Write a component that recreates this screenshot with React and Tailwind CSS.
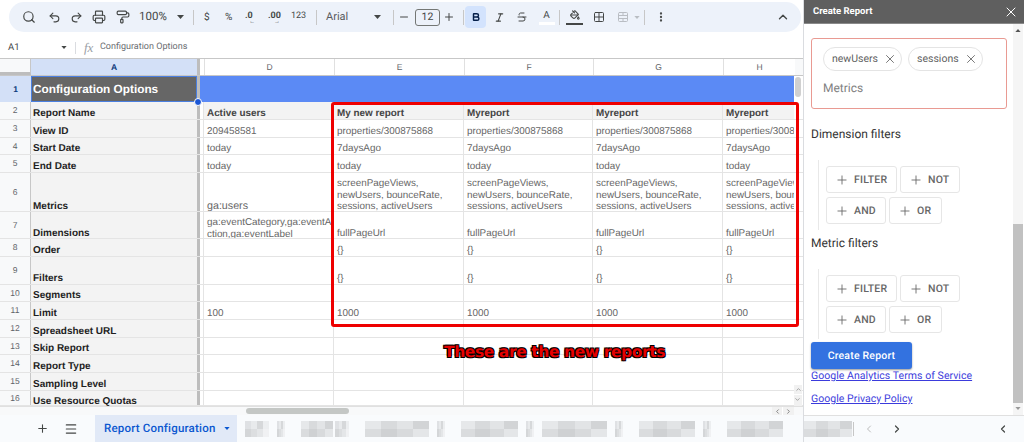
import React from "react";
import { Search, Undo2, Redo2, Printer, PaintRoller, ChevronUp, Minus, Plus, Bold, Italic, Strikethrough, PaintBucket, Grid2x2, TableCellsMerge, MoreVertical, X, Menu, ChevronLeft, ChevronRight } from "lucide-react";

const sans = "font-['Liberation_Sans',Arial,sans-serif]";
const roboto = "font-['Roboto','Liberation_Sans',sans-serif]";

const metrics = "screenPageViews, newUsers, bounceRate, sessions, activeUsers";
const rows = [
  { n: 2, h: "h-[18px]", label: "Report Name", head: true, d: "Active users", e: "My new report", o: "Myreport" },
  { n: 3, h: "h-[18px]", label: "View ID", d: "209458581", e: "properties/300875868", o: "properties/300875868", hv: "properties/3008" },
  { n: 4, h: "h-[17px]", label: "Start Date", d: "today", e: "7daysAgo", o: "7daysAgo" },
  { n: 5, h: "h-[18px]", label: "End Date", d: "today", e: "today", o: "today" },
  { n: 6, h: "h-[39px]", label: "Metrics", nudge: "translate-y-[2px]", cn: "translate-y-[3px]", d: <span className="text-[10.7px] relative -top-[1px]">ga:users</span>, e: metrics, o: metrics, wrap: true },
  { n: 7, h: "h-[27px]", label: "Dimensions", nudge: "translate-y-[2px]", cn: "translate-y-[2px]", d: <span className="relative top-[1px]">ga:eventCategory,ga:eventA<br />ction,ga:eventLabel</span>, e: "fullPageUrl", o: "fullPageUrl" },
  { n: 8, h: "h-[18px]", label: "Order", d: "", e: "{}", o: "{}" },
  { n: 9, h: "h-[28px]", label: "Filters", d: "", e: "{}", o: "{}" },
  { n: 10, h: "h-[17px]", label: "Segments", d: "", e: "", o: "" },
  { n: 11, h: "h-[18px]", label: "Limit", d: "100", e: "1000", o: "1000" },
  { n: 12, h: "h-[18px]", label: "Spreadsheet URL", d: "", e: "", o: "" },
  { n: 13, h: "h-[17px]", label: "Skip Report", d: "", e: "", o: "" },
  { n: 14, h: "h-[18px]", label: "Report Type", d: "", e: "", o: "" },
  { n: 15, h: "h-[18px]", label: "Sampling Level", d: "", e: "", o: "" },
  { n: 16, h: "h-[15px]", label: "Use Resource Quotas", nudge: "translate-y-[3px]", d: "", e: "", o: "" },
];

function Tool({ children, className = "" }) {
  return <div className={`flex items-center justify-center shrink-0 text-[#444746] ${className}`}>{children}</div>;
}

function Sep() {
  return <div className="w-px h-[15px] bg-[#c7c7c7] shrink-0" />;
}

function Caret({ className = "", fill = "#444746", w = 7, h = 4 }) {
  return <svg width={w} height={h} viewBox="0 0 7 4" className={`shrink-0 ${className}`}><path d="M0 0h7L3.5 4z" fill={fill} /></svg>;
}

function Toolbar() {
  return (
    <div className="h-[37px] pt-[2px] pl-[9px] pb-[5px] bg-white shrink-0">
      <div className={`h-[30px] w-[792px] rounded-full bg-[#edf2fa] flex items-center text-[#444746] ${roboto}`}>
        <Tool className="ml-[12px] w-[16px]"><Search size={14} /></Tool>
        <Tool className="ml-[9px] w-[16px]"><Undo2 size={13} /></Tool>
        <Tool className="ml-[6px] w-[16px]"><Redo2 size={13} /></Tool>
        <Tool className="ml-[7px] w-[16px]"><Printer size={14} /></Tool>
        <Tool className="ml-[8px] w-[16px]"><PaintRoller size={14} /></Tool>
        <span className="ml-[8px] text-[11.5px] w-[31px]">100%</span>
        <Caret className="ml-[7px]" />
        <div className="ml-[9px]"><Sep /></div>
        <span className="ml-[10px] text-[10px] w-[8px]">$</span>
        <span className="ml-[13px] text-[10px] w-[10px]">%</span>
        <span className="ml-[10px] text-[9px] font-bold w-[12px] relative -top-[1px] leading-none">.0<span className="absolute left-[4px] top-[7px] text-[6px]">←</span></span>
        <span className="ml-[11px] text-[9px] font-bold w-[15px] relative -top-[1px] leading-none">.00<span className="absolute left-[6px] top-[7px] text-[6px]">→</span></span>
        <span className="ml-[8px] text-[9px] w-[15px]">123</span>
        <div className="ml-[10px]"><Sep /></div>
        <span className={`ml-[9px] text-[11px] w-[32px] text-[#5a5c5f] ${roboto}`}>Arial</span>
        <Caret className="ml-[16px]" />
        <div className="ml-[12px]"><Sep /></div>
        <Tool className="ml-[2px] w-[16px]"><Minus size={12} /></Tool>
        <div className="ml-[3px] w-[25px] h-[17px] rounded-[3px] border border-[#747775] flex items-center justify-center text-[10.5px]">12</div>
        <Tool className="ml-[1px] w-[16px]"><Plus size={12} /></Tool>
        <div className="ml-[6px]"><Sep /></div>
        <div className="ml-[1px] w-[21px] h-[22px] rounded-[4px] bg-[#d3e3fd] flex items-center justify-center text-[#041e49]"><Bold size={10} strokeWidth={3.5} /></div>
        <Tool className="ml-[5px] w-[16px]"><Italic size={11} strokeWidth={2.4} /></Tool>
        <Tool className="ml-[7px] w-[16px]"><Strikethrough size={12} /></Tool>
        <div className="ml-[8px] w-[17px] flex flex-col items-center text-[10px] leading-[11px]">A<div className="w-[16px] h-[3px] bg-white mt-[1px]" /></div>
        <div className="ml-[4px]"><Sep /></div>
        <div className="ml-[6px] w-[17px] flex flex-col items-center text-[#444746]"><PaintBucket size={10} strokeWidth={2.6} /><div className="w-[17px] h-[2px] bg-[#444746] mt-[3px]" /></div>
        <Tool className="ml-[9px] w-[14px]"><Grid2x2 size={12} /></Tool>
        <Tool className="ml-[10px] w-[14px] opacity-30"><TableCellsMerge size={12} /></Tool>
        <Caret className="ml-[4px] opacity-30" w={6} h={3} />
        <div className="ml-[4px]"><Sep /></div>
        <Tool className="ml-[9px] w-[14px]"><MoreVertical size={12} strokeWidth={2.6} /></Tool>
        <Tool className="ml-[108px] w-[14px]"><ChevronUp size={14} strokeWidth={2.4} /></Tool>
      </div>
    </div>
  );
}

function FormulaBar() {
  return (
    <div className={`h-[22px] shrink-0 bg-white border-b border-[#c7c7c7] flex items-center text-[#5f6368] ${roboto}`}>
      <span className="ml-[8px] w-[48px] text-[9.5px] text-[#444746] pt-[1px]">A1</span>
      <Caret className="ml-[5px]" w={6} h={3} />
      <div className="ml-[8px] w-px h-[12px] bg-[#dadce0]" />
      <span className="ml-[8px] text-[13px] italic text-[#9aa0a6] font-['Liberation_Serif',serif] w-[17px]">fx</span>
      <span className="-ml-[1px] text-[9px] text-[#6b6e72] pt-[1px]">Configuration Options</span>
    </div>
  );
}

function Cell({ w, children, head, border = true, wrap, nudge = "translate-y-[1px]" }) {
  return (
    <div className={`${w} h-full shrink-0 px-[3px] flex items-end ${wrap ? "pb-[1px]" : "pb-0"} ${border ? "border-r border-[#e4e4e4]" : ""} ${head ? "bg-[#f3f3f3] font-bold text-[#444]" : "text-[#666]"} overflow-hidden`}>
      <div className={`w-full ${nudge} ${wrap ? "leading-[11.7px]" : "leading-[12px] whitespace-nowrap"} text-[9.9px]`}>{children}</div>
    </div>
  );
}

function ColHeader() {
  const cols = [["w-[130px]", "D"], ["w-[130px]", "E"], ["w-[129px]", "F"], ["w-[130px]", "G"], ["w-[72px]", "H"]];
  return (
    <div className={`h-[17px] shrink-0 flex text-[8.5px] text-[#5f6368] border-b border-[#c7c7c7] ${sans}`}>
      <div className="w-[31px] bg-[#f8f9fa] border-r border-[#c7c7c7] border-b-[3px] border-b-[#bdbdbd]" />
      <div className="w-[166px] bg-[#d3e0f7] flex items-center justify-center font-bold text-[#0b3a7a] pt-[1px]">A</div>
      <div className="w-[3px] bg-[#bdbdbd]" />
      <div className="w-[4px] bg-white" />
      {cols.map(([w, c]) => (
        <div key={c} className={`${w} flex items-center justify-center border-l border-[#e0e0e0] bg-white pt-[1px]`}>{c}</div>
      ))}
      <div className="flex-1 bg-[#f8f9fa]" />
    </div>
  );
}

function Sheet() {
  return (
    <div className={`flex-1 min-h-0 flex flex-col relative ${sans}`}>
      <ColHeader />
      <div className="h-[26px] shrink-0 flex relative">
        <div className="w-[31px] bg-[#d3e0f7] flex items-center justify-center text-[8.5px] font-bold text-[#0b3a7a]">1</div>
        <div className="w-[166px] bg-[#666666] border border-[#4a7fe0] flex items-center pl-[1px] pt-[1px] text-white font-bold text-[11.8px]">Configuration Options</div>
        <div className="w-[3px] bg-[#bdbdbd]" />
        <div className="w-[594px] bg-[#5b8af5]" />
        <div className="flex-1 bg-white pl-[1px] pr-[2px]"><div className="h-[20px] mt-[1px] rounded-full bg-[#d0d0d0]" /></div>
        <div className="absolute left-[194px] bottom-[-4px] w-[6px] h-[6px] rounded-full bg-[#1a56d6] border border-white box-content z-10" />
      </div>
      {rows.map((r) => (
        <div key={r.n} className={`${r.h} shrink-0 flex border-b border-[#e4e4e4]`}>
          <div className="w-[31px] h-full bg-[#f8f9fa] border-r border-[#c7c7c7] flex items-center justify-center text-[8.5px] text-[#5f6368]">{r.n}</div>
          <div className="w-[166px] h-full bg-[#f3f3f3] flex items-end pl-[2px] text-[10px] leading-[13px] font-bold text-[#1f1f1f]">
            <span className={`whitespace-nowrap ${r.nudge || "translate-y-[1px]"}`}>{r.label}</span>
          </div>
          <div className="w-[3px] h-full bg-[#bdbdbd]" />
          <div className="w-[4px] h-full bg-white border-r border-[#e4e4e4]" />
          <Cell w="w-[130px]" head={r.head} nudge={r.cn}>{r.d}</Cell>
          <Cell w="w-[130px]" head={r.head} wrap={r.wrap} nudge={r.cn}>{r.e}</Cell>
          <Cell w="w-[129px]" head={r.head} wrap={r.wrap} nudge={r.cn}>{r.o}</Cell>
          <Cell w="w-[130px]" head={r.head} wrap={r.wrap} nudge={r.cn}>{r.o}</Cell>
          <div className="w-[71px] h-full overflow-hidden">
            <Cell w="w-[130px]" head={r.head} border={false} wrap={r.wrap} nudge={r.cn}>{r.hv || r.o}</Cell>
          </div>
          <div className="w-[9px] h-full bg-white shrink-0" />
        </div>
      ))}
      <div className="flex-1 min-h-0 flex relative items-center bg-[#f8f9fa] border-t border-[#e0e0e0]">
        <div className="ml-[246px] w-[103px] h-[6px] rounded-full bg-[#c4c7c5]" />
        <div className="absolute left-[772px] top-0 w-[22px] h-full flex text-[#777] bg-[#f1f1f1]">
          <div className="w-[11px] flex items-center justify-center border-r border-white"><ChevronLeft size={7} strokeWidth={3} /></div>
          <div className="w-[11px] flex items-center justify-center"><ChevronRight size={7} strokeWidth={3} /></div>
        </div>
      </div>
      <div className="absolute left-[794px] top-[326px] w-[8px] h-[21px] flex flex-col bg-[#f1f1f1] text-[#999]">
        <div className="h-[10px] flex items-center justify-center border-b border-white"><ChevronUp size={7} strokeWidth={3} /></div>
        <div className="h-[10px] flex items-center justify-center rotate-180"><ChevronUp size={7} strokeWidth={3} /></div>
      </div>
    </div>
  );
}

function Block({ w, ml, tones }) {
  return (
    <div className={`${w} ${ml} h-[16px] shrink-0 grid grid-cols-4 grid-rows-2`}>
      {tones.map((t, i) => <div key={i} className={t} />)}
    </div>
  );
}

const toneA = ["bg-[#dfe1e4]", "bg-[#e8eaec]", "bg-[#d6d8da]", "bg-[#eceef0]", "bg-[#d4d6d8]", "bg-[#dcdee0]", "bg-[#e4e6e8]", "bg-[#f0f1f3]"];
const toneB = ["bg-[#e6e8ea]", "bg-[#d8dadc]", "bg-[#e2e4e6]", "bg-[#d2d4d6]", "bg-[#dadcde]", "bg-[#cfd1d3]", "bg-[#d8dadc]", "bg-[#e4e6e8]"];

function Tabs() {
  return (
    <div className={`h-[27px] shrink-0 bg-[#f9fbfd] flex items-center relative ${roboto}`}>
      <Plus size={13} strokeWidth={2} className="ml-[36px] text-[#444746]" />
      <Menu size={14} strokeWidth={2} className="ml-[15px] text-[#444746]" />
      <div className="ml-[17px] w-[142px] h-full bg-[#e1e9f7] flex items-center text-[#0b57d0] pl-[9px] text-[11.5px] font-medium tracking-[0.2px] shrink-0">
        Report Configuration
        <Caret className="ml-[8px]" fill="#0b57d0" w={6} h={3} />
      </div>
      <div className="flex items-center">
        <Block w="w-[24px]" ml="ml-[8px]" tones={toneA} />
        <Block w="w-[8px]" ml="ml-[8px]" tones={toneA} />
        <Block w="w-[32px]" ml="ml-[16px]" tones={toneB} />
        <Block w="w-[14px]" ml="ml-[2px]" tones={toneA} />
        <Block w="w-[64px]" ml="ml-[16px]" tones={toneB} />
        <Block w="w-[8px]" ml="ml-[8px]" tones={toneA} />
        <Block w="w-[57px]" ml="ml-[16px]" tones={toneB} />
        <Block w="w-[8px]" ml="ml-[8px]" tones={toneA} />
        <Block w="w-[65px]" ml="ml-[8px]" tones={toneB} />
        <Block w="w-[8px]" ml="ml-[8px]" tones={toneA} />
        <Block w="w-[56px]" ml="ml-[16px]" tones={toneB} />
        <Block w="w-[8px]" ml="ml-[8px]" tones={toneA} />
        <Block w="w-[56px]" ml="ml-[16px]" tones={toneB} />
      </div>
    </div>
  );
}

function Chip({ label }) {
  return (
    <div className="h-[24px] rounded-full border border-[#e4e4e4] flex items-center pl-[8px] pr-[4px] text-[10.5px] text-[#5f5f5f]">
      {label}
      <X size={14} strokeWidth={1.5} className="ml-[5px] text-[#666]" />
    </div>
  );
}

function FilterBtn({ label, w }) {
  return (
    <div className={`${w} h-[27px] rounded-[3px] border border-[#e6e6e6] flex items-center pl-[8px] text-[10.5px] font-medium text-[#666] tracking-[0.2px]`}>
      <Plus size={14} strokeWidth={1.5} className="mr-[5px] text-[#666]" />
      {label}
    </div>
  );
}

function FilterGroup() {
  return (
    <div className="ml-[7px] pl-[7px] border-l border-[#e8e8e8] flex flex-col gap-[4px] py-[6px] mt-[18px]">
      <div className="flex gap-[3px]"><FilterBtn label="FILTER" w="w-[71px]" /><FilterBtn label="NOT" w="w-[60px]" /></div>
      <div className="flex gap-[3px]"><FilterBtn label="AND" w="w-[60px]" /><FilterBtn label="OR" w="w-[53px]" /></div>
    </div>
  );
}

function Sidebar() {
  return (
    <div className={`w-[221px] shrink-0 h-full flex flex-col bg-white border-l border-[#dadce0] ${roboto}`}>
      <div className="h-[24px] shrink-0 bg-[#5f5f5f] border-b border-[#8a8a8a] flex items-center justify-between pl-[9px] pr-[5px] pt-[1px] text-white text-[9.5px] font-bold">
        <span className="pt-[1px]">Create Report</span>
        <X size={16} strokeWidth={1.5} />
      </div>
      <div className="flex-1 min-h-0 flex">
        <div className="w-[209px] shrink-0 pl-[7px] pt-[14px]">
          <div className="w-[196px] h-[71px] rounded-[3px] border border-[#e99a92] pl-[11px] pt-[8px]">
            <div className="flex gap-[6px]"><Chip label="newUsers" /><Chip label="sessions" /></div>
            <div className="mt-[9px] text-[12px] text-[#808080] leading-[16px]">Metrics</div>
          </div>
          <div className="mt-[17px] text-[12px] leading-[16px] text-[#333]">Dimension filters</div>
          <FilterGroup />
          <div className="mt-[5px] text-[12px] leading-[16px] text-[#333]">Metric filters</div>
          <FilterGroup />
          <div className="w-[101px] h-[27px] mt-[3px] rounded-[3px] bg-[#3372e0] shadow-[0_1px_2px_rgba(0,0,0,0.4)] flex items-center justify-center text-white text-[10.5px] font-medium tracking-[0.2px]">Create Report</div>
          <div className="text-[10.5px] leading-[14px] tracking-[0.05px] text-[#3b3bdc] underline">Google Analytics Terms of Service</div>
          <div className="mt-[9px] text-[10.5px] leading-[14px] tracking-[0.05px] text-[#3b3bdc] underline">Google Privacy Policy</div>
        </div>
        <div className="w-[10px] shrink-0 h-[391px] bg-[#f5f5f5] relative">
          <Caret className="absolute left-[2px] top-[5px] rotate-180" fill="#555" w={6} h={3} />
          <div className="absolute top-[200px] bottom-[12px] inset-x-0 bg-[#c1c1c1]" />
          <Caret className="absolute left-[2px] bottom-[5px]" fill="#999" w={6} h={3} />
        </div>
      </div>
      <div className="h-[27px] shrink-0 bg-[#f9fbfd] border-t border-[#e0e0e0] flex items-center text-[#444746]">
        <Block w="w-[48px]" ml="ml-0" tones={toneB} />
        <div className="w-px h-[14px] bg-[#c7c7c7] ml-[1px]" />
        <ChevronLeft size={12} strokeWidth={2} className="ml-[9px] text-[#bbb]" />
        <ChevronRight size={12} strokeWidth={2.4} className="ml-[16px]" />
        <ChevronLeft size={12} strokeWidth={2.4} className="ml-[94px]" />
      </div>
    </div>
  );
}

export default function App() {
  return (
    <div className={`w-[1024px] h-[442px] overflow-hidden flex relative bg-white [text-rendering:geometricPrecision] ${sans}`}>
      <div className="w-[803px] h-full flex flex-col min-w-0">
        <Toolbar />
        <FormulaBar />
        <Sheet />
        <Tabs />
      </div>
      <Sidebar />
      <div className="absolute left-[331px] top-[102px] w-[468px] h-[225px] border-[3px] border-[#ee0000] rounded-[3px] pointer-events-none" />
      <div className="absolute left-[444px] top-[343px] text-[#e60000] font-bold text-[15.5px] leading-[18px] font-['DejaVu_Sans',sans-serif] tracking-[-0.4px] [text-shadow:-1px_-1px_0_#000,1px_-1px_0_#000,-1px_1px_0_#000,1px_1px_0_#000]">These are the new reports</div>
    </div>
  );
}
